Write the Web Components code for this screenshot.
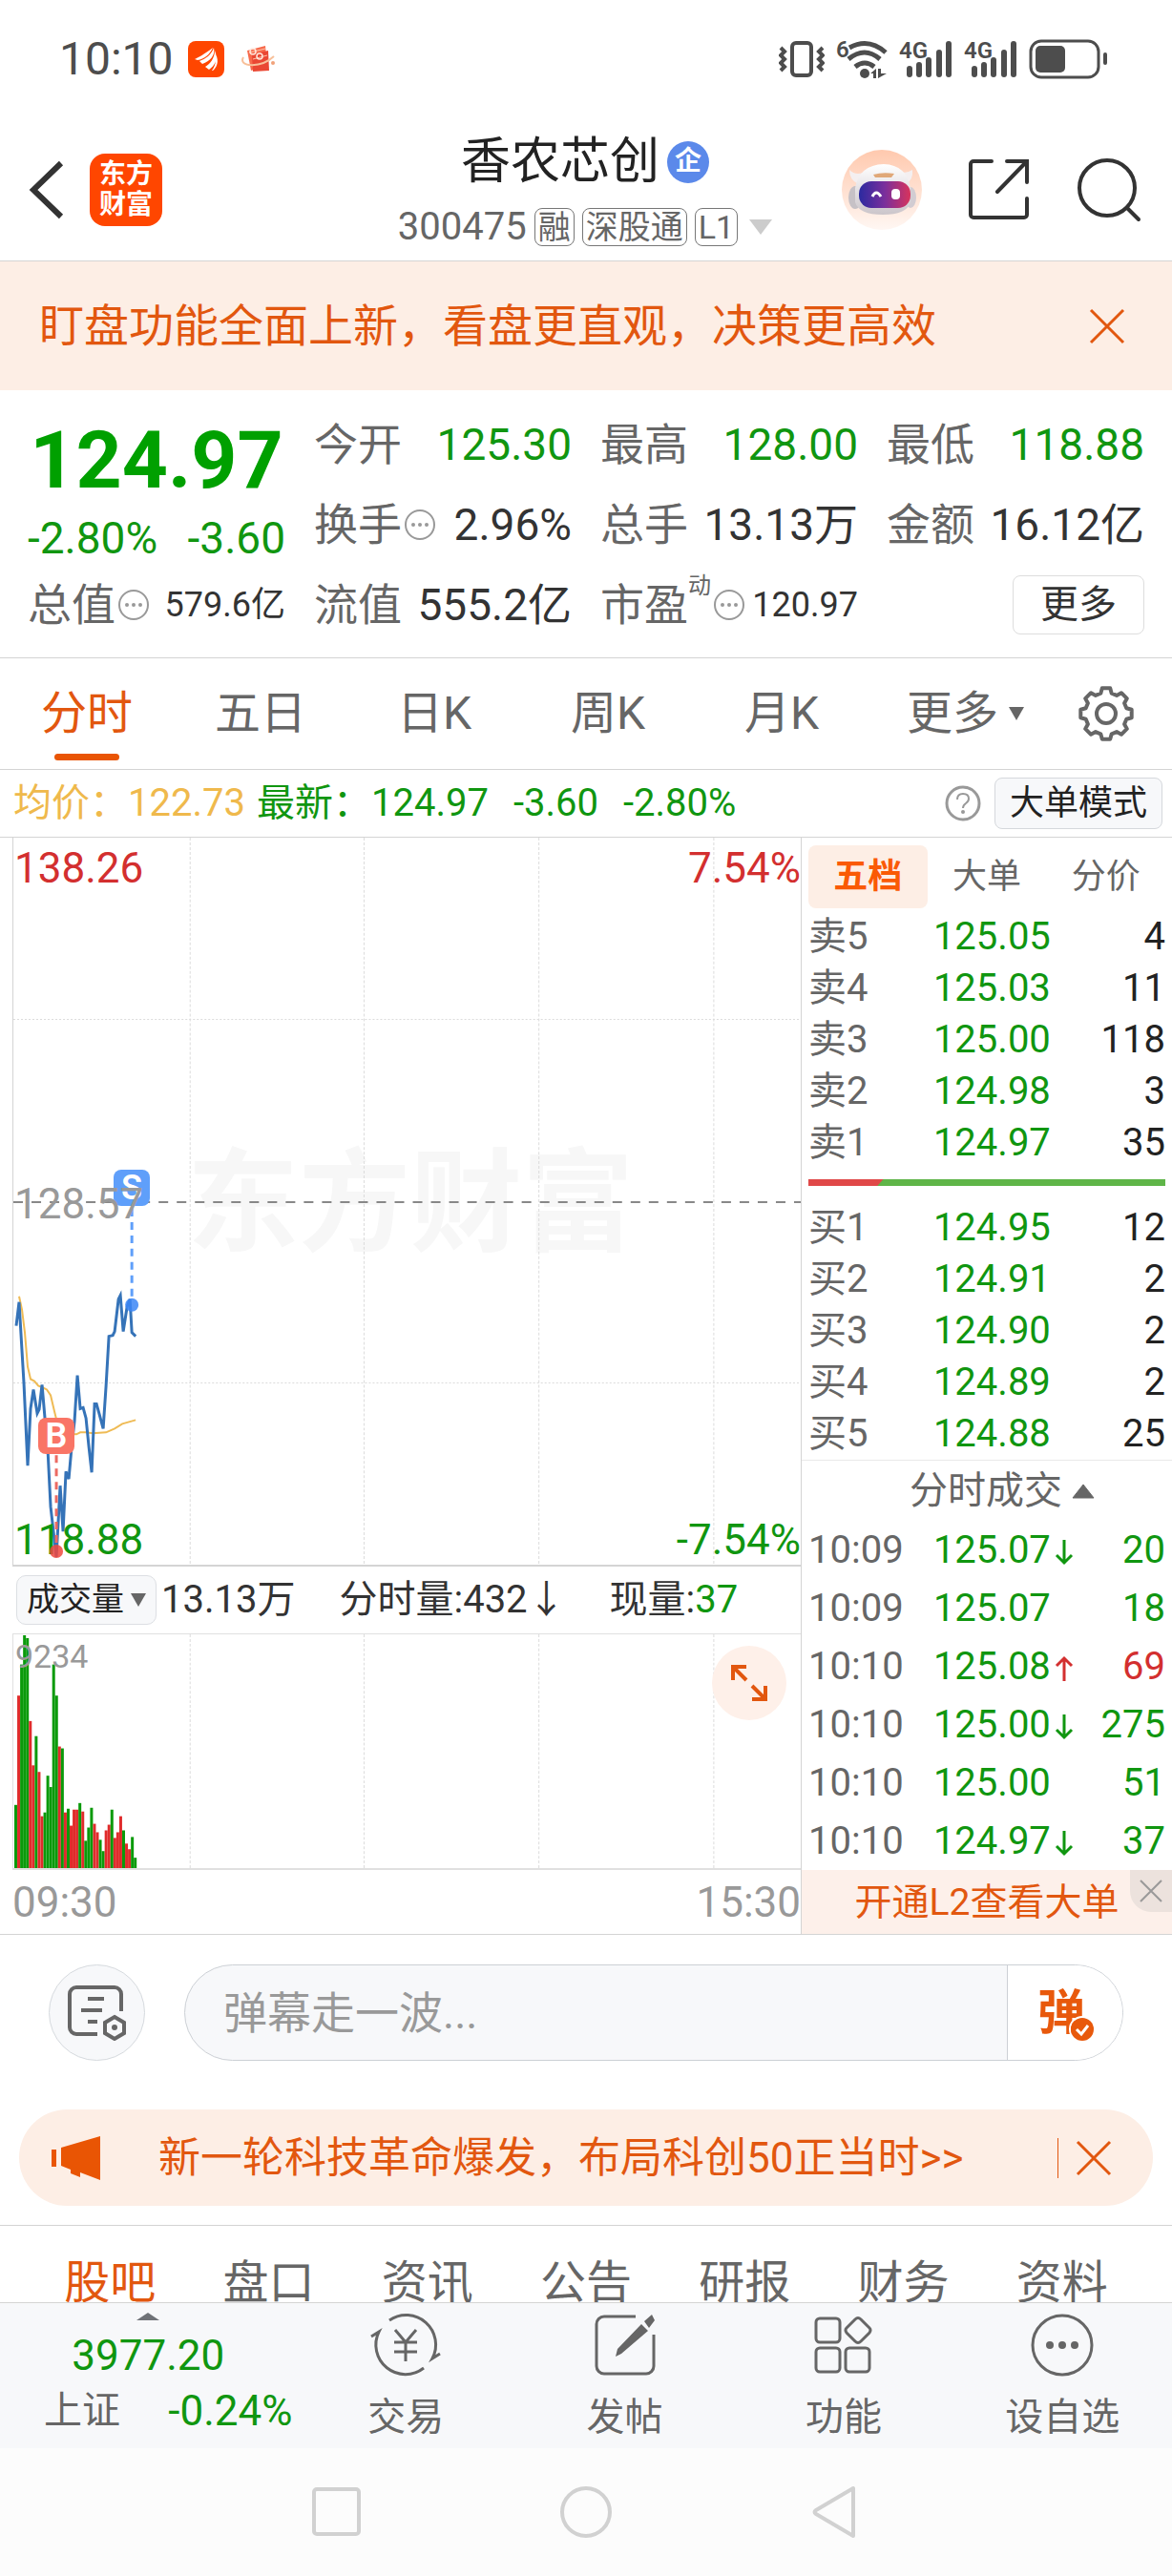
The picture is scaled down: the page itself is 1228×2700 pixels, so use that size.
<!DOCTYPE html>
<html lang="zh-CN">
<head>
<meta charset="utf-8">
<meta name="viewport" content="width=device-width, initial-scale=1">
<title>香农芯创 300475</title>
<style>
html {
  --accent: #e2570f;
  --up: #d32f2f;
  --down: #109610;
  --text: #333;
  --muted: #666;
  --faint: #999;
  --line: #d4d4d4;
  --tint: #fdeee5;
  --panel: #f7f8fa;
}
body {
  margin: 0;
  background: #fff;
  color: var(--text);
  font-family: Roboto, "Noto Sans CJK SC", sans-serif;
  font-size: 40px;
  line-height: 56px;
}
</style>
</head>
<body>
<stock-page></stock-page>

<script>
/**
 * Base element: renders its html getter into an open shadow root.
 */
class BaseElement extends HTMLElement {
  constructor() {
    super();
    this.template = document.createElement("template");
    this.attachShadow({ mode: "open" });
  }
  connectedCallback() {
    this.render();
  }
  get shared() {
    return `
<style>
* { box-sizing: border-box; }
button, input, select {
  margin: 0;
  padding: 0;
  border: 0;
  border-radius: 0;
  background: none;
  color: inherit;
  font: inherit;
  appearance: none;
}
button { cursor: pointer; display: inline-flex; align-items: center; justify-content: center; }
a { color: inherit; text-decoration: none; }
.down { color: var(--down); }
.up { color: var(--up); }
</style>`;
  }
  get html() {
    return `<slot></slot>`;
  }
  render() {
    this.template.innerHTML = this.shared + this.html;
    this.shadowRoot.innerHTML = "";
    this.shadowRoot.appendChild(this.template.content.cloneNode(true));
  }
}

// outline of an eight tooth cog around 30,30
const gearPath = () => {
  const points = [];
  for (let i = 0; i < 8; i++) {
    [[-15, 22], [-9, 27], [9, 27], [15, 22]].forEach(([offset, r]) => {
      const a = ((i * 45 + offset - 90) * Math.PI) / 180;
      points.push(`${(30 + r * Math.cos(a)).toFixed(1)} ${(30 + r * Math.sin(a)).toFixed(1)}`);
    });
  }
  return `M${points.join("L")}Z`;
};

// name: [width, height, markup]
const ICONS = {
  app: [38, 38, `<rect width="38" height="38" rx="8" fill="#ff4600"/><path d="M7 19c4-2 10-5 19-12-3 7-9 12-16 13zM12 21c6-2 13-7 15-14 2 8-4 14-12 17zM18 27c5-3 10-9 10-17 4 9 0 16-6 20zM25 31c3-4 5-10 4-17 4 7 1 14-3 17z" fill="#fff"/>`],
  wallet: [40, 34, `<path d="M9 8l19-5 2 20-17 6z" fill="#f76a4c"/><path d="M14 12l17-4 1 21-17 1z" fill="#ea4733"/><path d="M11 10l17-4M15 17l15-4" stroke="#ffc3aa" stroke-width="1" fill="none"/><circle cx="15" cy="9" r="3" fill="none" stroke="#ffe6da" stroke-width="1.5"/><circle cx="22" cy="14" r="3" fill="none" stroke="#ffe6da" stroke-width="1.5"/><path d="M5 15c-6 10 18 12 32-1" stroke="#f8c09a" stroke-width="2" fill="none"/><circle cx="36" cy="21" r="2" fill="#f1a27a"/>`],
  vibrate: [48, 40, `<rect x="14" y="3" width="20" height="34" rx="4" fill="none" stroke="currentColor" stroke-width="4"/><path d="M2 8l4 4-4 4 4 4-4 4 4 4-4 4M46 8l-4 4 4 4-4 4 4 4-4 4 4 4" fill="none" stroke="currentColor" stroke-width="4"/>`],
  wifi: [54, 42, `<text x="0" y="19" font-size="24" font-weight="600">6</text><g fill="none" stroke="currentColor" stroke-width="5"><path d="M14 9q20-11 38 5"/><path d="M13 21q17-14 33 0"/><path d="M20 29q10-8 20 0"/></g><circle cx="30" cy="36" r="5" fill="currentColor"/><path d="M36 36l6-5v10h-3v-5zM44 41v-10h3v5h6z" fill="currentColor"/>`],
  signal: [56, 40, `<text x="0" y="19" font-size="24" font-weight="600">4G</text><g fill="currentColor"><rect x="8" y="27" width="6" height="12" rx="3"/><rect x="18" y="23" width="6" height="16" rx="3"/><rect x="28" y="18" width="6" height="21" rx="3"/><rect x="39" y="10" width="6" height="29" rx="3"/><rect x="49" y="1" width="6" height="38" rx="3"/></g>`],
  battery: [84, 42, `<rect x="2" y="2" width="71" height="38" rx="11" fill="none" stroke="currentColor" stroke-width="3"/><rect x="7" y="7" width="31" height="28" rx="5" fill="currentColor"/><rect x="78" y="14" width="4" height="13" rx="2" fill="currentColor"/>`],
  back: [38, 64, `<path d="M34 4L5 32l29 28" fill="none" stroke="currentColor" stroke-width="6"/>`],
  robot: [84, 84, `<defs><linearGradient id="sky" x2="0" y2="1"><stop offset="0" stop-color="#ffc9ae"/><stop offset="1" stop-color="#fff7f3"/></linearGradient><linearGradient id="visor"><stop offset="0" stop-color="#2b2aa0"/><stop offset=".5" stop-color="#7a2f9c"/><stop offset="1" stop-color="#d8345c"/></linearGradient><linearGradient id="head" x2="0" y2="1"><stop offset="0" stop-color="#fff"/><stop offset="1" stop-color="#cbc5ca"/></linearGradient></defs><circle cx="42" cy="42" r="42" fill="url(#sky)"/><path d="M8 21q6 6 14 3l-6 11q-8-4-8-14zM74 21q-6 4-12 2l6 12q7-4 6-14z" fill="#f4eff0"/><ellipse cx="14" cy="50" rx="7" ry="12" fill="#c6c1c6"/><ellipse cx="72" cy="50" rx="6" ry="11" fill="#d2ccd2"/><path d="M14 40Q18 16 44 15 68 16 72 40L72 55Q68 68 43 68 18 68 14 55z" fill="url(#head)"/><path d="M33 26q10-3 22-1l-3 4H35z" fill="#e0a878"/><rect x="18" y="33" width="54" height="28" rx="13" fill="url(#visor)"/><path d="M32 49q4-8 9 0" fill="none" stroke="#fff" stroke-width="3"/><rect x="52" y="41" width="9" height="11" rx="4" fill="#fff"/>`],
  share: [66, 66, `<path d="M25 3H6a3 3 0 0 0-3 3v53a3 3 0 0 0 3 3h53a3 3 0 0 0 3-3V42M41 3h21v22M61 4L31 35" fill="none" stroke="currentColor" stroke-width="4" stroke-linecap="round"/>`],
  search: [68, 68, `<circle cx="32" cy="32" r="29" fill="none" stroke="currentColor" stroke-width="4"/><path d="M53 53l12 12" stroke="currentColor" stroke-width="4" stroke-linecap="round"/>`],
  close: [38, 38, `<path d="M2 2l34 34M36 2L2 36" stroke="currentColor" stroke-width="3"/>`],
  closeSmall: [26, 26, `<path d="M2 2l22 22M24 2L2 24" stroke="currentColor" stroke-width="2"/>`],
  info: [34, 34, `<circle cx="17" cy="17" r="15" fill="none" stroke="#999" stroke-width="2"/><g fill="#999"><circle cx="10" cy="17" r="2"/><circle cx="17" cy="17" r="2"/><circle cx="24" cy="17" r="2"/></g>`],
  question: [38, 38, `<circle cx="19" cy="19" r="17" fill="none" stroke="#999" stroke-width="3"/><path d="M13 15q0-6 6-6t6 5q0 3-3 5t-3 5" fill="none" stroke="#999" stroke-width="2"/><circle cx="19" cy="28" r="2" fill="#999"/>`],
  gear: [60, 60, `<path d="${gearPath()}" fill="none" stroke="currentColor" stroke-width="4" stroke-linejoin="round"/><circle cx="30" cy="30" r="10" fill="none" stroke="currentColor" stroke-width="4"/>`],
  caretDown: [18, 16, `<path d="M1 1h16L9 15z" fill="currentColor"/>`],
  caretWide: [24, 16, `<path d="M0 0h24L12 16z" fill="currentColor"/>`],
  caretUp: [24, 16, `<path d="M1 15L12 1l11 14z" fill="currentColor" stroke="currentColor" stroke-linejoin="round"/>`],
  caretTiny: [24, 8, `<path d="M0 8L12 0l12 8z" fill="currentColor"/>`],
  fall: [20, 28, `<path d="M10 1v24M2 17l8 8 8-8" fill="none" stroke="currentColor" stroke-width="3"/>`],
  rise: [20, 28, `<path d="M10 27V3M2 11l8-8 8 8" fill="none" stroke="currentColor" stroke-width="3"/>`],
  expand: [40, 40, `<path d="M17 3H3v14M4 4l13 13M23 37h14V23M36 36L23 23" fill="none" stroke="currentColor" stroke-width="4"/>`],
  note: [62, 58, `<path d="M56 27V9a7 7 0 0 0-7-7H9a7 7 0 0 0-7 7v35a7 7 0 0 0 7 7h22M21 14h17M14 26h22M21 38h10" fill="none" stroke="currentColor" stroke-width="4"/><path d="M49 33l10 6v11l-10 6-10-6V39z" fill="none" stroke="currentColor" stroke-width="4"/><circle cx="49" cy="44" r="3" fill="currentColor"/>`],
  check: [24, 24, `<circle cx="12" cy="12" r="12" fill="#e8590c"/><path d="M6 12l5 5 7-9" fill="none" stroke="#fff" stroke-width="3"/>`],
  horn: [52, 46, `<path d="M0 14h5v18H0zM10 12L51 0v46L30 38v5l-10-4v-4l-10-4z" fill="#e95504"/>`],
  trade: [76, 68, `<g fill="none" stroke="currentColor" stroke-width="3"><path d="M21 8A31 31 0 0 1 66 48l8-5M57 58A31 31 0 0 1 10 20L2 25"/><path d="M27 18l11 13 11-13M38 31v20M26 31h24M26 41h24"/></g>`],
  edit: [66, 66, `<path d="M44 3H11a8 8 0 0 0-8 8v44a8 8 0 0 0 8 8h44a8 8 0 0 0 8-8V22" fill="none" stroke="currentColor" stroke-width="3"/><path d="M50 11l7 7-28 24-6 3 2-8zM53 8l8-7 3 6-6 8z" fill="currentColor"/>`],
  grid: [62, 62, `<g fill="none" stroke="currentColor" stroke-width="3"><rect x="2" y="3" width="25" height="25" rx="4"/><rect x="2" y="34" width="25" height="25" rx="4"/><rect x="33" y="34" width="25" height="25" rx="4"/><path d="M43 4q3-3 6 0l9 9q2 2 0 5l-9 9q-3 3-6 0l-9-9q-2-3 0-5z"/></g>`],
  more: [66, 66, `<circle cx="33" cy="33" r="31" fill="none" stroke="currentColor" stroke-width="3"/><g fill="currentColor"><circle cx="20" cy="33" r="4"/><circle cx="33" cy="33" r="4"/><circle cx="46" cy="33" r="4"/></g>`],
  recent: [54, 54, `<rect x="3" y="3" width="47" height="47" rx="3" fill="none" stroke="currentColor" stroke-width="4"/>`],
  home: [58, 58, `<circle cx="29" cy="29" r="25" fill="none" stroke="currentColor" stroke-width="4"/>`],
  return: [50, 58, `<path d="M44 4v50L5 31q-3-2 0-4z" fill="none" stroke="currentColor" stroke-width="4" stroke-linejoin="round"/>`],
};

/**
 * `ui-icon` draws one of the icons above at its own size
 */
class UiIcon extends BaseElement {
  get html() {
    const [w, h, markup] = ICONS[this.getAttribute("name")];
    return `
<style>
:host { display: inline-flex; flex: none; }
svg { display: block; font-family: Roboto, sans-serif; fill: currentColor; }
</style>
<svg width="${w}" height="${h}" viewBox="0 0 ${w} ${h}" aria-hidden="true">${markup}</svg>`;
  }
}
customElements.define("ui-icon", UiIcon);

class StatusBar extends BaseElement {
  get html() {
    return `
<style>
:host { display: flex; align-items: center; height: 124px; padding: 0 66px 0 62px; color: #4d4d4d; }
.time { font-size: 48px; }
.left, .right { display: flex; align-items: center; gap: 15px; }
.right { margin-left: auto; gap: 12px; }
</style>
<div class="left"><span class="time">10:10</span><ui-icon name="app"></ui-icon><ui-icon name="wallet"></ui-icon></div>
<div class="right">
  <ui-icon name="vibrate"></ui-icon><ui-icon name="wifi"></ui-icon><ui-icon name="signal"></ui-icon><ui-icon name="signal"></ui-icon><ui-icon name="battery"></ui-icon>
</div>`;
  }
}
customElements.define("status-bar", StatusBar);

class StockHeader extends BaseElement {
  get html() {
    return `
<style>
:host {
  display: grid;
  grid-template-columns: 1fr auto 1fr;
  align-items: center;
  height: 150px;
  padding: 0 32px 0 30px;
  border-bottom: 1px solid var(--line);
}
.left, .right, h1, .code { display: flex; align-items: center; }
.left { gap: 26px; }
.logo {
  width: 76px;
  height: 76px;
  border-radius: 16px;
  background: #ff4600;
  color: #fff;
  font-size: 28px;
  font-weight: 700;
  line-height: 32px;
  text-align: center;
  padding-top: 6px;
}
.title { padding-top: 10px; }
h1 { margin: 0; justify-content: center; gap: 8px; font-size: 52px; font-weight: 400; line-height: 68px; color: #222; }
.badge { width: 44px; height: 44px; border-radius: 50%; background: #5b89ea; color: #fff; font-size: 28px; font-weight: 700; line-height: 42px; text-align: center; }
.code { justify-content: center; gap: 8px; line-height: 68px; color: var(--muted); }
.code span { border: 1px solid #777; border-radius: 8px; padding: 0 3px; font-size: 34px; line-height: 38px; }
.code ui-icon { margin-left: 4px; color: #ccc; }
.right { justify-content: flex-end; gap: 48px; }
</style>
<div class="left">
  <button aria-label="返回"><ui-icon name="back"></ui-icon></button>
  <div class="logo">东方<br>财富</div>
</div>
<div class="title">
  <h1>香农芯创<span class="badge">企</span></h1>
  <div class="code">300475<span>融</span><span>深股通</span><span>L1</span><ui-icon name="caretWide"></ui-icon></div>
</div>
<div class="right">
  <button aria-label="助手"><ui-icon name="robot"></ui-icon></button>
  <button aria-label="分享"><ui-icon name="share"></ui-icon></button>
  <button aria-label="搜索"><ui-icon name="search"></ui-icon></button>
</div>`;
  }
}
customElements.define("stock-header", StockHeader);

/**
 * `notice-bar` full width notice, text comes in through the slot
 */
class NoticeBar extends BaseElement {
  get html() {
    return `
<style>
:host { display: flex; align-items: center; justify-content: space-between; height: 135px; padding: 0 49px 0 41px; background: var(--tint); color: var(--accent); font-size: 47px; }
</style>
<slot></slot>
<button aria-label="关闭"><ui-icon name="close"></ui-icon></button>`;
  }
}
customElements.define("notice-bar", NoticeBar);

class QuoteItem extends BaseElement {
  get html() {
    const small = this.hasAttribute("small");
    const sup = this.getAttribute("sup");
    return `
<style>
:host { display: flex; align-items: center; white-space: nowrap; font-size: 46px; line-height: 64px; }
.label { color: var(--muted); }
sup { align-self: flex-start; color: var(--muted); font-size: 24px; line-height: 44px; }
ui-icon { margin-left: 2px; }
.value { margin-left: auto; }
.value.small { font-size: 36px; }
</style>
<span class="label">${this.getAttribute("label")}</span>
${sup ? `<sup>${sup}</sup>` : ""}
${this.hasAttribute("info") ? `<ui-icon name="info"></ui-icon>` : ""}
<span class="value ${small ? "small" : ""} ${this.getAttribute("tone") || ""}">${this.getAttribute("value")}</span>`;
  }
}
customElements.define("quote-item", QuoteItem);

class QuotePanel extends BaseElement {
  get html() {
    return `
<style>
:host {
  display: grid;
  grid-template-columns: repeat(4, minmax(0, 1fr));
  grid-auto-rows: 84px;
  column-gap: 30px;
  height: 281px;
  padding: 15px 29px;
  border-bottom: 1px solid var(--line);
}
.price { grid-row: span 2; padding-top: 14px; color: var(--down); }
.now { display: block; color: #00a000; font-size: 84px; font-weight: 700; line-height: 90px; text-align: center; }
.change { display: flex; justify-content: space-between; font-size: 46px; line-height: 72px; }
.more { justify-self: end; align-self: center; width: 138px; height: 62px; border: 1px solid #ddd; border-radius: 8px; font-size: 40px; }
</style>
<div class="price"><span class="now">124.97</span><div class="change"><span>-2.80%</span><span>-3.60</span></div></div>
<quote-item label="今开" value="125.30" tone="down"></quote-item>
<quote-item label="最高" value="128.00" tone="down"></quote-item>
<quote-item label="最低" value="118.88" tone="down"></quote-item>
<quote-item label="换手" value="2.96%" info></quote-item>
<quote-item label="总手" value="13.13万"></quote-item>
<quote-item label="金额" value="16.12亿"></quote-item>
<quote-item label="总值" value="579.6亿" info small></quote-item>
<quote-item label="流值" value="555.2亿"></quote-item>
<quote-item label="市盈" sup="动" value="120.97" info small></quote-item>
<button class="more">更多</button>`;
  }
}
customElements.define("quote-panel", QuotePanel);

class ChartTabs extends BaseElement {
  get html() {
    return `
<style>
:host { display: flex; height: 117px; border-bottom: 1px solid var(--line); color: var(--muted); font-size: 48px; }
button { flex: 182; gap: 10px; }
.active { position: relative; color: var(--accent); }
.active::after { content: ""; position: absolute; bottom: 9px; width: 68px; height: 7px; border-radius: 4px; background: #e95504; }
.others { flex: 204; }
.gear { flex: 114; justify-content: flex-start; }
.gear ui-icon { margin-left: 15px; }
</style>
<button class="active">分时</button><button>五日</button><button>日K</button><button>周K</button><button>月K</button><button class="others">更多<ui-icon name="caretDown"></ui-icon></button>
<button class="gear" aria-label="设置"><ui-icon name="gear"></ui-icon></button>`;
  }
}
customElements.define("chart-tabs", ChartTabs);

class ChartLegend extends BaseElement {
  get html() {
    return `
<style>
:host { display: flex; align-items: center; height: 71px; padding: 0 10px 0 14px; border-bottom: 1px solid var(--line); white-space: nowrap; }
.avg { color: #efb94c; margin-right: 12px; }
.last { display: flex; gap: 26px; }
ui-icon { margin-left: auto; }
button { height: 54px; margin-left: 14px; padding: 0 15px; border: 1px solid #d5d8dc; border-radius: 8px; background: var(--panel); color: #222; font-size: 36px; }
</style>
<span class="avg">均价：122.73</span>
<span class="last down"><span>最新：124.97</span><span>-3.60</span><span>-2.80%</span></span>
<ui-icon name="question"></ui-icon>
<button>大单模式</button>`;
  }
}
customElements.define("chart-legend", ChartLegend);

const GRID = `<path d="M185 0V764M367 0V764M550 0V764M733 0V764" stroke="#dcdcdc" stroke-dasharray="3 2" fill="none"/>`;

/**
 * `price-chart` intraday price line with average and trade marks
 */
class PriceChart extends BaseElement {
  get html() {
    return `
<style>
:host { display: block; position: relative; height: 764px; border-left: 1px solid var(--line); border-bottom: 2px solid var(--line); font-size: 44px; line-height: 52px; }
svg { position: absolute; inset: 0; width: 100%; height: 100%; }
.mark { position: absolute; top: 314px; left: 182px; color: #f7f7f7; font-size: 117px; font-weight: 700; line-height: 140px; }
.tl, .ml, .bl { position: absolute; left: 1px; }
.tr, .br { position: absolute; right: 0; }
.tl, .tr { top: 6px; }
.ml { top: 358px; color: var(--faint); }
.bl, .br { bottom: 0; }
.pin { position: absolute; width: 38px; height: 38px; border-radius: 8px; color: #fff; font-size: 36px; font-weight: 600; line-height: 38px; text-align: center; }
.sell { left: 105px; top: 348px; background: #5f9ffa; }
.buy { left: 26px; top: 608px; background: #f97566; }
</style>
<div class="mark">东方财富</div>
<svg viewBox="0 0 824 764" preserveAspectRatio="none" aria-hidden="true">
  ${GRID}
  <path d="M0 191H824M0 573H824" stroke="#dcdcdc" stroke-dasharray="2 2"/>
  <path d="M0 383H824" stroke="#888" stroke-width="2" stroke-dasharray="10 9"/>
  <polyline fill="none" stroke="#efbb55" stroke-width="2" points="6,482 9,496 12,520 15,556 18,569 22,571 26,576 31,578 35,580 39,586 43,603 46,615 51,623 58,627 66,627 70,625 76,625 83,626 97,625 106,621 114,616 128,612"/>
  <polyline fill="none" stroke="#3573b8" stroke-width="3" points="3,513 6,488 11,573 15,660 18,600 21,580 25,605 27,601 30,575 33,610 36,643 39,703 45,756 49,681 52,729 55,666 58,674 61,640 64,613 67,565 70,600 73,599 76,610 79,640 82,667 85,595 87,595 90,606 94,621 97,576 100,524 104,523 106,519 110,485 112,481 115,519 119,493 122,485 124,520 128,524"/>
</svg>
<span class="tl up">138.26</span><span class="tr up">7.54%</span>
<span class="bl down">118.88</span><span class="br down">-7.54%</span>
<svg viewBox="0 0 824 764" preserveAspectRatio="none" aria-hidden="true">
  <path d="M124 390V486" stroke="#5f9ffa" stroke-width="3" stroke-dasharray="8 6"/>
  <circle cx="124" cy="491" r="7" fill="#3b86f6" fill-opacity=".85"/>
  <path d="M45 649V745" stroke="#ec6a62" stroke-width="3" stroke-dasharray="8 6"/>
  <circle cx="45" cy="750" r="7" fill="#f0483e" fill-opacity=".85"/>
</svg>
<span class="pin sell">S</span><span class="pin buy">B</span>
<span class="ml">128.57</span>`;
  }
}
customElements.define("price-chart", PriceChart);

class VolumeChart extends BaseElement {
  get html() {
    const heights = [67, 183, 216, 247, 244, 156, 109, 140, 102, 55, 59, 98, 86, 216, 183, 129, 127, 59, 63, 45, 62, 62, 69, 60, 29, 43, 64, 47, 38, 30, 18, 40, 46, 62, 32, 38, 55, 40, 26, 20, 33, 11];
    const tones = "grgggrrgrrgggggrgrgrrrgrgggrrggrrgrrrgrrgg";
    const bars = heights.map((h, i) => `<rect x="${(1 + i * 3.05).toFixed(2)}" y="${248 - h}" width="3" height="${h}" fill="${tones[i] === "g" ? "#0a9a0a" : "#e02b2b"}"/>`).join("");
    return `
<style>
:host { display: block; }
.head { display: flex; align-items: center; height: 70px; padding-left: 4px; white-space: nowrap; }
.pick { position: relative; display: flex; align-items: center; }
select { width: 147px; height: 52px; padding: 0 0 2px 10px; border: 1px solid #dcdfe3; border-radius: 10px; background: var(--panel); color: #222; font-size: 34px; line-height: 46px; }
.pick ui-icon { position: absolute; right: 10px; color: var(--muted); pointer-events: none; }
.head > span { margin-right: 46px; }
.head > .total { margin-left: 5px; }
.plot { position: relative; height: 248px; border: solid #e0e0e0; border-width: 1px 0 2px 1px; }
svg { position: absolute; inset: 0; width: 100%; height: 100%; }
.max { position: absolute; left: 2px; top: 1px; color: var(--faint); font-size: 34px; line-height: 44px; }
.expand { position: absolute; right: 15px; top: 12px; width: 78px; height: 78px; border-radius: 50%; background: #fef0e9; color: var(--accent); }
.axis { display: flex; justify-content: space-between; align-items: center; height: 67px; color: var(--faint); font-size: 44px; }
</style>
<div class="head">
  <label class="pick"><select aria-label="指标"><option>成交量</option></select><ui-icon name="caretDown"></ui-icon></label>
  <span class="total">13.13万</span>
  <span>分时量:432↓</span>
  <span>现量:<span class="down">37</span></span>
</div>
<div class="plot">
  <svg viewBox="0 0 824 248" preserveAspectRatio="none" aria-hidden="true">${GRID}${bars}</svg>
  <span class="max">9234</span>
  <button class="expand" aria-label="全屏"><ui-icon name="expand"></ui-icon></button>
</div>
<div class="axis"><span>09:30</span><span>15:30</span></div>`;
  }
}
customElements.define("volume-chart", VolumeChart);

class OrderBook extends BaseElement {
  rows(side, list) {
    return `<table aria-label="${side}盘"><tbody>${list.map(([n, price, count]) => `<tr><th scope="row">${side}${n}</th><td class="down">${price}</td><td>${count}</td></tr>`).join("")}</tbody></table>`;
  }
  get html() {
    return `
<style>
:host { display: block; padding: 8px 7px 0; border-bottom: 1px solid #e9e9e9; }
.tabs { display: grid; grid-template-columns: repeat(3, 1fr); margin-bottom: 3px; color: var(--muted); font-size: 36px; }
.tabs button { height: 66px; border-radius: 8px; }
.tabs .active { background: var(--tint); color: #fa5a05; font-weight: 700; }
table { width: 100%; border-collapse: collapse; table-layout: fixed; }
th, td { height: 54px; padding: 0; line-height: 54px; text-align: left; font-weight: 400; }
th { width: 35%; color: var(--muted); }
td:last-child { width: 24%; color: #222; text-align: right; }
.ratio { display: flex; height: 7px; margin: 11px 0 17px; background: #5fb548; }
.ratio i { width: 21%; background: #e04848; clip-path: polygon(0 0, 100% 0, 92% 100%, 0 100%); }
</style>
<div class="tabs"><button class="active">五档</button><button>大单</button><button>分价</button></div>
${this.rows("卖", [[5, "125.05", 4], [4, "125.03", 11], [3, "125.00", 118], [2, "124.98", 3], [1, "124.97", 35]])}
<div class="ratio"><i></i></div>
${this.rows("买", [[1, "124.95", 12], [2, "124.91", 2], [3, "124.90", 2], [4, "124.89", 2], [5, "124.88", 25]])}`;
  }
}
customElements.define("order-book", OrderBook);

class TradeList extends BaseElement {
  get html() {
    const trades = [
      ["10:09", "125.07", "fall", 20, "down"],
      ["10:09", "125.07", "", 18, "down"],
      ["10:10", "125.08", "rise", 69, "up"],
      ["10:10", "125.00", "fall", 275, "down"],
      ["10:10", "125.00", "", 51, "down"],
      ["10:10", "124.97", "fall", 37, "down"],
    ];
    return `
<style>
:host { display: block; }
.head { width: 100%; height: 63px; gap: 10px; padding-left: 32px; color: var(--muted); }
.list { padding: 0 7px; }
table { width: 100%; border-collapse: collapse; table-layout: fixed; }
th, td { height: 61px; padding: 0; line-height: 61px; text-align: left; font-weight: 400; white-space: nowrap; }
th { width: 35%; color: var(--muted); }
td:last-child { width: 24%; text-align: right; }
td ui-icon { margin-left: 4px; vertical-align: middle; }
.promo { position: relative; height: 67px; display: flex; align-items: center; justify-content: center; background: #fdf0ea; color: var(--accent); font-size: 39px; }
.promo button { position: absolute; right: 0; top: 0; width: 44px; height: 44px; border-bottom-left-radius: 22px; background: #ece2dd; color: var(--faint); }
</style>
<button class="head">分时成交<ui-icon name="caretUp"></ui-icon></button>
<div class="list"><table aria-label="分时成交"><tbody>
${trades.map(([time, price, move, count, tone]) => `<tr><th scope="row">${time}</th><td class="down">${price}${move ? `<ui-icon name="${move}" class="${tone}"></ui-icon>` : ""}</td><td class="${tone}">${count}</td></tr>`).join("")}
</tbody></table></div>
<div class="promo"><a href="#level2">开通L2查看大单</a><button aria-label="关闭"><ui-icon name="closeSmall"></ui-icon></button></div>`;
  }
}
customElements.define("trade-list", TradeList);

class DanmuBar extends BaseElement {
  get html() {
    return `
<style>
:host { display: flex; gap: 41px; padding: 31px 51px 51px; }
.list { flex: none; width: 101px; height: 101px; border: 1px solid #d6dade; border-radius: 50%; background: var(--panel); color: var(--muted); }
.field { flex: 1; display: flex; height: 101px; border: 1px solid #ccd0d5; border-radius: 51px; overflow: hidden; background: var(--panel); font-size: 46px; }
input { flex: 1; min-width: 0; padding-left: 40px; }
input::placeholder { color: var(--faint); opacity: 1; }
.send { position: relative; flex: none; width: 121px; padding-right: 8px; border-left: 1px solid #ccd0d5; background: #fff; color: #e8590c; font-size: 50px; font-weight: 700; }
.send ui-icon { position: absolute; right: 28px; bottom: 18px; border: 2px solid #fff; border-radius: 50%; }
</style>
<button class="list" aria-label="弹幕列表"><ui-icon name="note"></ui-icon></button>
<div class="field"><input type="text" aria-label="弹幕" placeholder="弹幕走一波..."><button class="send">弹<ui-icon name="check"></ui-icon></button></div>`;
  }
}
customElements.define("danmu-bar", DanmuBar);

class PromoPill extends BaseElement {
  get html() {
    return `
<style>
:host { display: flex; align-items: center; height: 101px; margin: 0 20px 20px; padding: 0 43px 0 34px; border-radius: 51px; background: var(--tint); color: var(--accent); font-size: 44px; white-space: nowrap; }
a { margin-left: 60px; }
button { margin-left: auto; padding-left: 18px; border-left: 1px solid var(--accent); height: 42px; }
</style>
<ui-icon name="horn"></ui-icon>
<a href="#promo"><slot></slot></a>
<button aria-label="关闭"><ui-icon name="close"></ui-icon></button>`;
  }
}
customElements.define("promo-pill", PromoPill);

class SectionTabs extends BaseElement {
  get html() {
    return `
<style>
:host { display: block; height: 81px; overflow: hidden; border-top: 1px solid var(--line); }
nav { display: flex; padding: 0 32px; color: var(--muted); font-size: 48px; line-height: 120px; }
a { flex: 1; text-align: center; }
.active { color: var(--accent); }
</style>
<nav><a class="active" href="#guba">股吧</a><a href="#pankou">盘口</a><a href="#news">资讯</a><a href="#notice">公告</a><a href="#report">研报</a><a href="#finance">财务</a><a href="#profile">资料</a></nav>`;
  }
}
customElements.define("section-tabs", SectionTabs);

class BottomBar extends BaseElement {
  get html() {
    return `
<style>
:host { display: flex; height: 153px; border-top: 1px solid var(--line); background: var(--panel); color: var(--muted); }
.index { flex: 310; display: flex; flex-direction: column; align-items: center; padding-top: 10px; color: #6f7277; }
.index strong { margin-top: 7px; font-size: 44px; font-weight: 400; line-height: 60px; }
.index div { display: flex; align-self: stretch; justify-content: space-between; padding: 0 4px 0 46px; }
.index div .down { font-size: 44px; }
.index div span:first-child { color: var(--muted); }
.item { flex: 229; flex-direction: column; justify-content: flex-start; padding-top: 11px; }
.item ui-icon { height: 66px; align-items: center; margin-bottom: 15px; }
</style>
<div class="index"><ui-icon name="caretTiny"></ui-icon><strong class="down">3977.20</strong><div><span>上证</span><span class="down">-0.24%</span></div></div>
<button class="item"><ui-icon name="trade"></ui-icon><span>交易</span></button>
<button class="item"><ui-icon name="edit"></ui-icon><span>发帖</span></button>
<button class="item"><ui-icon name="grid"></ui-icon><span>功能</span></button>
<button class="item"><ui-icon name="more"></ui-icon><span>设自选</span></button>`;
  }
}
customElements.define("bottom-bar", BottomBar);

class NavKeys extends BaseElement {
  get html() {
    return `
<style>
:host { display: flex; align-items: center; justify-content: center; height: 134px; background: #fcfcfc; color: #d1d1d1; }
button { width: 261px; }
</style>
<button aria-label="最近"><ui-icon name="recent"></ui-icon></button>
<button aria-label="主页"><ui-icon name="home"></ui-icon></button>
<button aria-label="后退"><ui-icon name="return"></ui-icon></button>`;
  }
}
customElements.define("nav-keys", NavKeys);

class StockPage extends BaseElement {
  get html() {
    return `
<style>
:host { display: block; }
.market { display: grid; grid-template-columns: minmax(0, 839fr) minmax(0, 389fr); border-bottom: 1px solid var(--line); }
.chart { padding-left: 13px; }
.side { border-left: 1px solid var(--line); }
</style>
<status-bar></status-bar>
<stock-header></stock-header>
<notice-bar>盯盘功能全面上新，看盘更直观，决策更高效</notice-bar>
<quote-panel></quote-panel>
<chart-tabs></chart-tabs>
<chart-legend></chart-legend>
<div class="market">
  <div class="chart"><price-chart></price-chart><volume-chart></volume-chart></div>
  <div class="side"><order-book></order-book><trade-list></trade-list></div>
</div>
<danmu-bar></danmu-bar>
<promo-pill>新一轮科技革命爆发，布局科创50正当时&gt;&gt;</promo-pill>
<section-tabs></section-tabs>
<bottom-bar></bottom-bar>
<nav-keys></nav-keys>`;
  }
}
customElements.define("stock-page", StockPage);
</script>
</body>
</html>
